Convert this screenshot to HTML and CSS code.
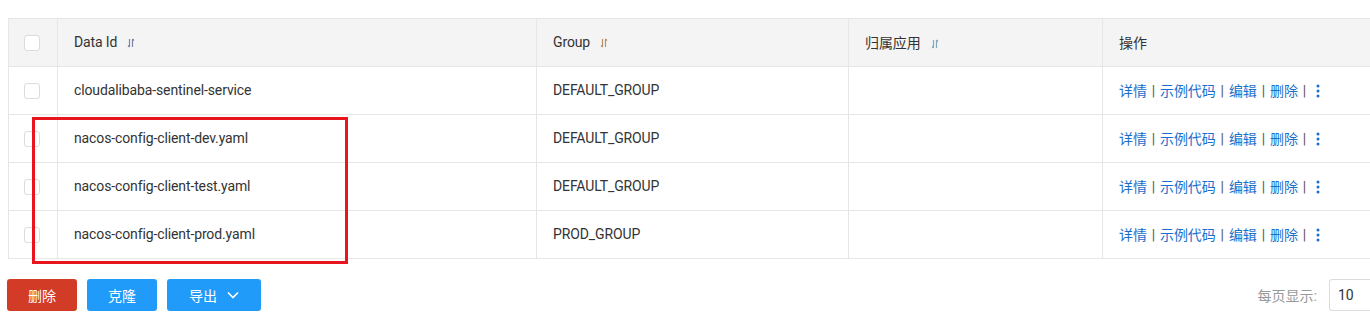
FILE: index.html
```html
<!DOCTYPE html>
<html lang="zh">
<head>
<meta charset="utf-8">
<link rel="stylesheet" href="styles.css">
</head>
<body>
<div class="page">
  <table class="grid">
    <colgroup>
      <col class="c-check"><col class="c-id"><col class="c-group"><col class="c-app"><col class="c-op">
    </colgroup>
    <thead>
      <tr>
        <th class="cell-check"><span class="checkbox"></span></th>
        <th>Data Id<svg class="sort" viewBox="0 0 8 10" width="8" height="10"><path d="M2.5 1v8M1 7.5l1.5 1.5M5.5 9V1M5.5 1L7 2.5" stroke="#7d84a8" stroke-width="1.2" fill="none"/></svg></th>
        <th>Group<svg class="sort" viewBox="0 0 8 10" width="8" height="10"><path d="M2.5 1v8M1 7.5l1.5 1.5M5.5 9V1M5.5 1L7 2.5" stroke="#b89068" stroke-width="1.2" fill="none"/></svg></th>
        <th>归属应用<svg class="sort" viewBox="0 0 8 10" width="8" height="10"><path d="M2.5 1v8M1 7.5l1.5 1.5M5.5 9V1M5.5 1L7 2.5" stroke="#7fa8b8" stroke-width="1.2" fill="none"/></svg></th>
        <th>操作</th>
      </tr>
    </thead>
    <tbody>
      <tr>
        <td class="cell-check"><span class="checkbox"></span></td>
        <td>cloudalibaba-sentinel-service</td>
        <td>DEFAULT_GROUP</td>
        <td></td>
        <td class="ops"><a>详情</a><span class="sep">|</span><a>示例代码</a><span class="sep">|</span><a>编辑</a><span class="sep">|</span><a>删除</a><span class="sep">|</span><svg class="more" viewBox="0 0 4 14" width="4" height="14"><circle cx="2" cy="2" r="1.5"/><circle cx="2" cy="7" r="1.5"/><circle cx="2" cy="12" r="1.5"/></svg></td>
      </tr>
      <tr>
        <td class="cell-check"><span class="checkbox"></span></td>
        <td>nacos-config-client-dev.yaml</td>
        <td>DEFAULT_GROUP</td>
        <td></td>
        <td class="ops"><a>详情</a><span class="sep">|</span><a>示例代码</a><span class="sep">|</span><a>编辑</a><span class="sep">|</span><a>删除</a><span class="sep">|</span><svg class="more" viewBox="0 0 4 14" width="4" height="14"><circle cx="2" cy="2" r="1.5"/><circle cx="2" cy="7" r="1.5"/><circle cx="2" cy="12" r="1.5"/></svg></td>
      </tr>
      <tr>
        <td class="cell-check"><span class="checkbox"></span></td>
        <td>nacos-config-client-test.yaml</td>
        <td>DEFAULT_GROUP</td>
        <td></td>
        <td class="ops"><a>详情</a><span class="sep">|</span><a>示例代码</a><span class="sep">|</span><a>编辑</a><span class="sep">|</span><a>删除</a><span class="sep">|</span><svg class="more" viewBox="0 0 4 14" width="4" height="14"><circle cx="2" cy="2" r="1.5"/><circle cx="2" cy="7" r="1.5"/><circle cx="2" cy="12" r="1.5"/></svg></td>
      </tr>
      <tr>
        <td class="cell-check"><span class="checkbox"></span></td>
        <td>nacos-config-client-prod.yaml</td>
        <td>PROD_GROUP</td>
        <td></td>
        <td class="ops"><a>详情</a><span class="sep">|</span><a>示例代码</a><span class="sep">|</span><a>编辑</a><span class="sep">|</span><a>删除</a><span class="sep">|</span><svg class="more" viewBox="0 0 4 14" width="4" height="14"><circle cx="2" cy="2" r="1.5"/><circle cx="2" cy="7" r="1.5"/><circle cx="2" cy="12" r="1.5"/></svg></td>
      </tr>
    </tbody>
  </table>
  <div class="highlight"></div>
  <div class="footer">
    <div class="actions">
      <button class="btn btn-danger">删除</button>
      <button class="btn btn-primary">克隆</button>
      <button class="btn btn-primary btn-export">导出<svg class="chev" viewBox="0 0 12 8" width="12" height="8"><path d="M1 1.5l5 5 5-5" stroke="#fff" stroke-width="1.6" fill="none"/></svg></button>
    </div>
    <div class="pager">
      <span class="pager-label">每页显示:</span>
      <span class="pager-select">10</span>
    </div>
  </div>
</div>
</body>
</html>
```

FILE: styles.css
```css
html, body {
  margin: 0;
  padding: 0;
  background: #fff;
  overflow: hidden;
}
body {
  font-family: Roboto, "Noto Sans CJK SC", sans-serif;
  font-size: 14px;
  color: #333;
}
.page {
  position: relative;
  width: 1440px;
  padding: 18px 0 0 8px;
}
.grid {
  border-collapse: collapse;
  width: 1432px;
  table-layout: fixed;
}
.c-check { width: 49px; }
.c-id { width: 479px; }
.c-group { width: 312px; }
.c-app { width: 254px; }
.c-op { width: auto; }
.grid th, .grid td {
  border: 1px solid #e6e6e6;
  height: 46px;
  padding: 0 16px 1px;
  text-align: left;
  vertical-align: middle;
  white-space: nowrap;
  letter-spacing: -0.12px;
}
.grid th {
  background: #f4f4f4;
  font-weight: normal;
  color: #333;
}
.grid .cell-check {
  padding: 0 0 0 15px;
}
.checkbox {
  display: block;
  width: 14px;
  height: 14px;
  border: 1px solid #dcdcdc;
  border-radius: 3px;
  background: #fff;
}
.sort {
  margin-left: 10px;
  vertical-align: -1px;
}
.ops a {
  color: #1a6fcc;
  cursor: pointer;
}
.sep {
  margin: 0 5px;
  color: #555;
}
.more {
  fill: #1a6fcc;
  margin-left: 5px;
  vertical-align: -2px;
}
.highlight {
  position: absolute;
  left: 32px;
  top: 117px;
  width: 310px;
  height: 141px;
  border: 3px solid #e8141e;
  pointer-events: none;
}
.footer {
  display: flex;
  justify-content: space-between;
  align-items: center;
  margin-top: 20px;
  width: 1370px;
}
.actions {
  display: flex;
  gap: 10px;
  margin-left: -1px;
}
.btn {
  height: 32px;
  border: none;
  border-radius: 3px;
  color: #fff;
  font-family: Roboto, "Noto Sans CJK SC", sans-serif;
  font-size: 14px;
  padding: 0;
  width: 70px;
  display: flex;
  align-items: center;
  justify-content: center;
}
.btn-danger { background: #d23c26; }
.btn-primary { background: #209bfa; }
.btn-export { width: 94px; gap: 10px; }
.pager {
  display: flex;
  align-items: center;
  gap: 12px;
}
.pager-label {
  color: #999;
}
.pager-select {
  display: block;
  width: 40px;
  height: 30px;
  line-height: 30px;
  border: 1px solid #dcdcdc;
  border-right: none;
  border-radius: 3px 0 0 3px;
  padding-left: 8px;
  color: #333;
}
```
